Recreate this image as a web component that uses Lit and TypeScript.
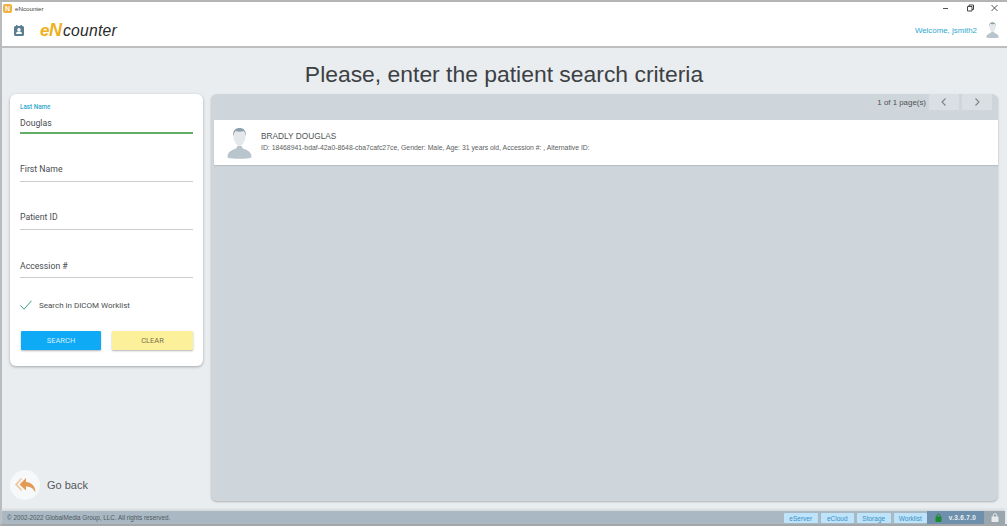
import { LitElement, html, css } from "lit";
import { customElement } from "lit/decorators.js";

const person = (w: number, h: number) => html`<svg width=${w} height=${h} viewBox="0 0 26 32">
  <path d="M0.5 31c0-5 3-7 7-8.5 2.5-1 3.300-2 3-3.500h5c-.3 1.500.5 2.500 3 3.500 4 1.500 7 3.500 7 8.500-3 1-7.500 1.500-12.500 1.500S3.500 32 .5 31z" fill="#b9c5cc"/>
  <path d="M6.500 8c0-5 3-7.500 6.500-7.500S19.500 3 19.500 8c0 5-3 11-6.500 11S6.500 13 6.500 8z" fill="#e4e8ea"/>
  <path d="M6.500 9c-.8-6 2.500-8.500 6.500-8.500S20.300 3 19.500 9c-.5-3-1-4.500-2-5.500-3 1-6 1-8.500 0-1.500 1.500-2 3-2.500 5.500z" fill="#8fa1ab"/>
</svg>`;

@customElement("app-root")
export class AppRoot extends LitElement {
  static styles = css`
    :host { display: block; width: 1007px; height: 526px; overflow: hidden; font-family: "Liberation Sans", Arial, sans-serif; color: #444; }
    .win { width: 100%; height: 100%; box-sizing: border-box; display: flex; flex-direction: column; border-top: 2px solid #b4b4b4; border-left: 2px solid #b9bcbe; border-bottom: 2px solid #a3a7a9; background: #e9edf0; }
    .titlebar { height: 12px; background: #fff; display: flex; align-items: center; padding-left: 1px; gap: 3px; font-size: 6.200px; color: #444; }
    .appicon { width: 9px; height: 9px; border-radius: 2px; background: #f0b040; color: #fff; font-size: 7px; font-weight: 700; display: flex; align-items: center; justify-content: center; line-height: 1; }
    .titletext { flex: 1; }
    .winbtns { display: flex; align-items: center; padding-right: 1px; }
    .winbtns svg { width: 24px; height: 10px; }
    .header { height: 32px; background: #fff; border-bottom: 2px solid #bcbebf; display: flex; align-items: center; padding: 0 8px 0 12px; }
    .logo { margin-left: 16px; font-size: 15.700px; font-style: italic; letter-spacing: .25px; color: #2b2b2b; font-family: "Liberation Sans", sans-serif; }
    .logo b { color: #efb021; font-weight: 700; font-size: 17px; letter-spacing: -.5px; margin-right: 1px; }
    .logo .n { font-size: 18px; letter-spacing: 0; }
    .spacer { flex: 1; }
    .welcome { color: #2fa8cf; font-size: 7.900px; margin-right: 9px; }
    .title { height: 46px; flex: none; display: flex; align-items: center; justify-content: center; font-size: 22.900px; color: #3c4043; padding: 6px 1px 0 0; box-sizing: border-box; }
    .content { flex: 1; display: flex; gap: 8px; padding: 0 9px 0 8px; align-items: flex-start; min-height: 0; }
    .side { flex: none; display: flex; flex-direction: column; justify-content: space-between; width: 193px; height: 407px; }
    .card { background: #fff; border-radius: 6px; box-shadow: 0 1px 3px rgba(0,0,0,.3); padding: 8px 10px 15px; height: 272px; box-sizing: border-box; display: flex; flex-direction: column; font-family: Roboto, sans-serif; }
    .field { height: 48px; box-sizing: border-box; border-bottom: 1px solid #c9cccd; display: flex; flex-direction: column; justify-content: flex-end; font-size: 8.700px; padding-bottom: 7px; color: #4a4d4f; flex: none; }
    .field.first { height: 32px; border-bottom: 2px solid #62ad66; padding-bottom: 4px; }
    .field.acc { padding-bottom: 6px; }
    .small { color: #2fa8cf; font-size: 6.300px; font-weight: 500; margin-bottom: 7px; }
    .check { display: flex; align-items: center; gap: 7px; font-size: 8px; color: #4d5053; margin-top: 18px; height: 18px; }
    .btns { display: flex; justify-content: space-between; margin-top: 17px; padding-left: 1px; }
    .btn { height: 19px; border-radius: 1px; display: flex; align-items: center; justify-content: center; font-size: 7.500px; box-shadow: 0 1px 2px rgba(0,0,0,.3); }
    .search { width: 80px; background: #0eaaf5; color: #d6f0ff; }
    .clear { width: 81px; background: #fdf09a; color: #77724a; }
    .back { display: flex; align-items: center; gap: 7px; font-size: 11px; color: #55585a; margin-bottom: 1px; padding-left: 0; }
    .circle { width: 30px; height: 30px; border-radius: 50%; background: #f6f8f9; display: flex; align-items: center; justify-content: center; }
    .panel { flex: 1; height: 407px; background: #ced6db; border-radius: 6px; box-shadow: 0 1px 2px rgba(0,0,0,.25); display: flex; flex-direction: column; }
    .pager { height: 26px; flex: none; display: flex; align-items: flex-start; justify-content: flex-end; font-size: 7.900px; color: #4e5254; padding-right: 6px; gap: 2px; }
    .pinfo { height: 16px; display: flex; align-items: center; margin-right: 1px; }
    .pbtn { width: 30px; height: 16px; background: #d9dfe2; display: flex; align-items: center; justify-content: center; }
    .pbtn.n { margin-left: 1px; }
    .row { height: 45px; margin-left: 3px; background: #fff; display: flex; align-items: center; padding-left: 13px; gap: 9px; flex: none; box-shadow: 0 1px 1px rgba(0,0,0,.1); }
    .rowtext { padding-bottom: 4px; }
    .name { font-size: 8.300px; color: #505456; margin-bottom: 3px; }
    .meta { font-size: 6.850px; color: #5a5e60; }
    .footer { height: 13px; flex: none; margin: 10px 2px 0 0; background: #a9b8c2; display: flex; align-items: stretch; font-size: 6.300px; color: #505a62; box-shadow: 0 -2px 2px #d5dadd; }
    .copy { flex: 1; align-self: center; padding-left: 5px; }
    .tags { display: flex; gap: 3px; padding: 2px 0 1px 0; }
    .tag { width: 33.500px; display: flex; align-items: center; justify-content: center; background: #bde4fb; color: #3d8dc0; font-size: 6.500px; border-radius: 1px; }
    .ver { background: #6f90ac; width: 57px; color: #e9f0f5; display: flex; align-items: center; justify-content: center; gap: 7px; font-size: 6.500px; font-weight: 700; letter-spacing: .3px; }
    .lock { background: #9aa6ae; width: 21px; display: flex; align-items: center; justify-content: center; }
  `;

  render() {
    return html`<div class="win">
      <div class="titlebar">
        <div class="appicon">N</div>
        <div class="titletext">eNcounter</div>
        <div class="winbtns">
          <svg viewBox="0 0 24 10"><path d="M9 5.500h5" stroke="#555" fill="none"/></svg>
          <svg viewBox="0 0 24 10"><path d="M9.500 3.500h4.500v4.500h-4.500zM11 3.500V2h4.500v4.500H14" stroke="#444" fill="none"/></svg>
          <svg viewBox="0 0 24 10"><path d="M9.500 2l6 6M15.500 2l-6 6" stroke="#555" fill="none"/></svg>
        </div>
      </div>
      <div class="header">
        <svg width="10" height="11" viewBox="0 0 10 11">
          <path d="M1.500 1h7A1.500 1.500 0 0 1 10 2.500v7A1.500 1.500 0 0 1 8.500 11h-7A1.500 1.500 0 0 1 0 9.500v-7A1.500 1.500 0 0 1 1.500 1z" fill="#5b7d92"/>
          <rect x="2" y="0" width="1.500" height="2" fill="#5b7d92"/><rect x="6.500" y="0" width="1.500" height="2" fill="#5b7d92"/>
          <circle cx="5" cy="4.700" r="1.700" fill="#fff"/><path d="M2 9c0-2 1.300-2.500 3-2.500S8 7 8 9z" fill="#fff"/>
        </svg>
        <div class="logo"><b>e<span class="n">N</span></b>counter</div>
        <div class="spacer"></div>
        <div class="welcome">Welcome, jsmith2</div>
        ${person(13, 16)}
      </div>
      <div class="title">Please, enter the patient search criteria</div>
      <div class="content">
        <div class="side">
          <div class="card">
            <div class="field first"><div class="small">Last Name</div>Douglas</div>
            <div class="field">First Name</div>
            <div class="field">Patient ID</div>
            <div class="field acc">Accession #</div>
            <div class="check">
              <svg width="12" height="10" viewBox="0 0 12 10"><path d="M.5 5.500L4 9.200 11.500.8" stroke="#3f9a8c" stroke-width="1" fill="none"/></svg>
              Search in DICOM Worklist
            </div>
            <div class="btns"><div class="btn search">SEARCH</div><div class="btn clear">CLEAR</div></div>
          </div>
          <div class="back">
            <div class="circle">
              <svg width="21" height="15" viewBox="0 0 21 15">
                <path d="M6 0L0 6.500 6 13 7 12 2.500 6.500 7 1z" fill="#f0c79e"/>
                <path d="M11 0L4.500 6.500 11 12.500V8.500c4 0 7 1.500 9.500 6 0-6-3.500-10-9.500-10.500z" fill="#e39a55"/>
              </svg>
            </div>
            Go back
          </div>
        </div>
        <div class="panel">
          <div class="pager">
            <span class="pinfo">1 of 1 page(s)</span>
            <div class="pbtn"><svg width="6" height="8" viewBox="0 0 6 8"><path d="M4.500 .5L1 4l3.500 3.500" stroke="#7a8388" fill="none" stroke-width="1.100"/></svg></div>
            <div class="pbtn n"><svg width="6" height="8" viewBox="0 0 6 8"><path d="M1.500 .5L5 4 1.500 7.500" stroke="#7a8388" fill="none" stroke-width="1.100"/></svg></div>
          </div>
          <div class="row">
            ${person(25, 32)}
            <div class="rowtext">
              <div class="name">BRADLY DOUGLAS</div>
              <div class="meta">ID: 18468941-bdaf-42a0-8648-cba7cafc27ce, Gender: Male, Age: 31 years old, Accession #: , Alternative ID:</div>
            </div>
          </div>
        </div>
      </div>
      <div class="footer">
        <div class="copy">© 2002-2022 GlobalMedia Group, LLC. All rights reserved.</div>
        <div class="tags"><div class="tag">eServer</div><div class="tag">eCloud</div><div class="tag">Storage</div><div class="tag">Worklist</div></div>
        <div class="ver">
          <svg width="7" height="9" viewBox="0 0 7 9"><path d="M2 4V2.500a1.500 1.500 0 0 1 3 0V4" stroke="#1c8a2e" fill="none"/><rect x=".5" y="3.500" width="6" height="5.500" rx="1" fill="#1c8a2e"/></svg>
          <span>v.3.6.7.0</span>
        </div>
        <div class="lock"><svg width="8" height="9" viewBox="0 0 8 9"><path d="M2.200 4V2.500a1.800 1.800 0 0 1 3.600 0V4" stroke="#e6eaec" fill="none"/><rect x=".5" y="3.500" width="7" height="5.500" rx=".5" fill="#e6eaec"/></svg></div>
      </div>
    </div>`;
  }
}
